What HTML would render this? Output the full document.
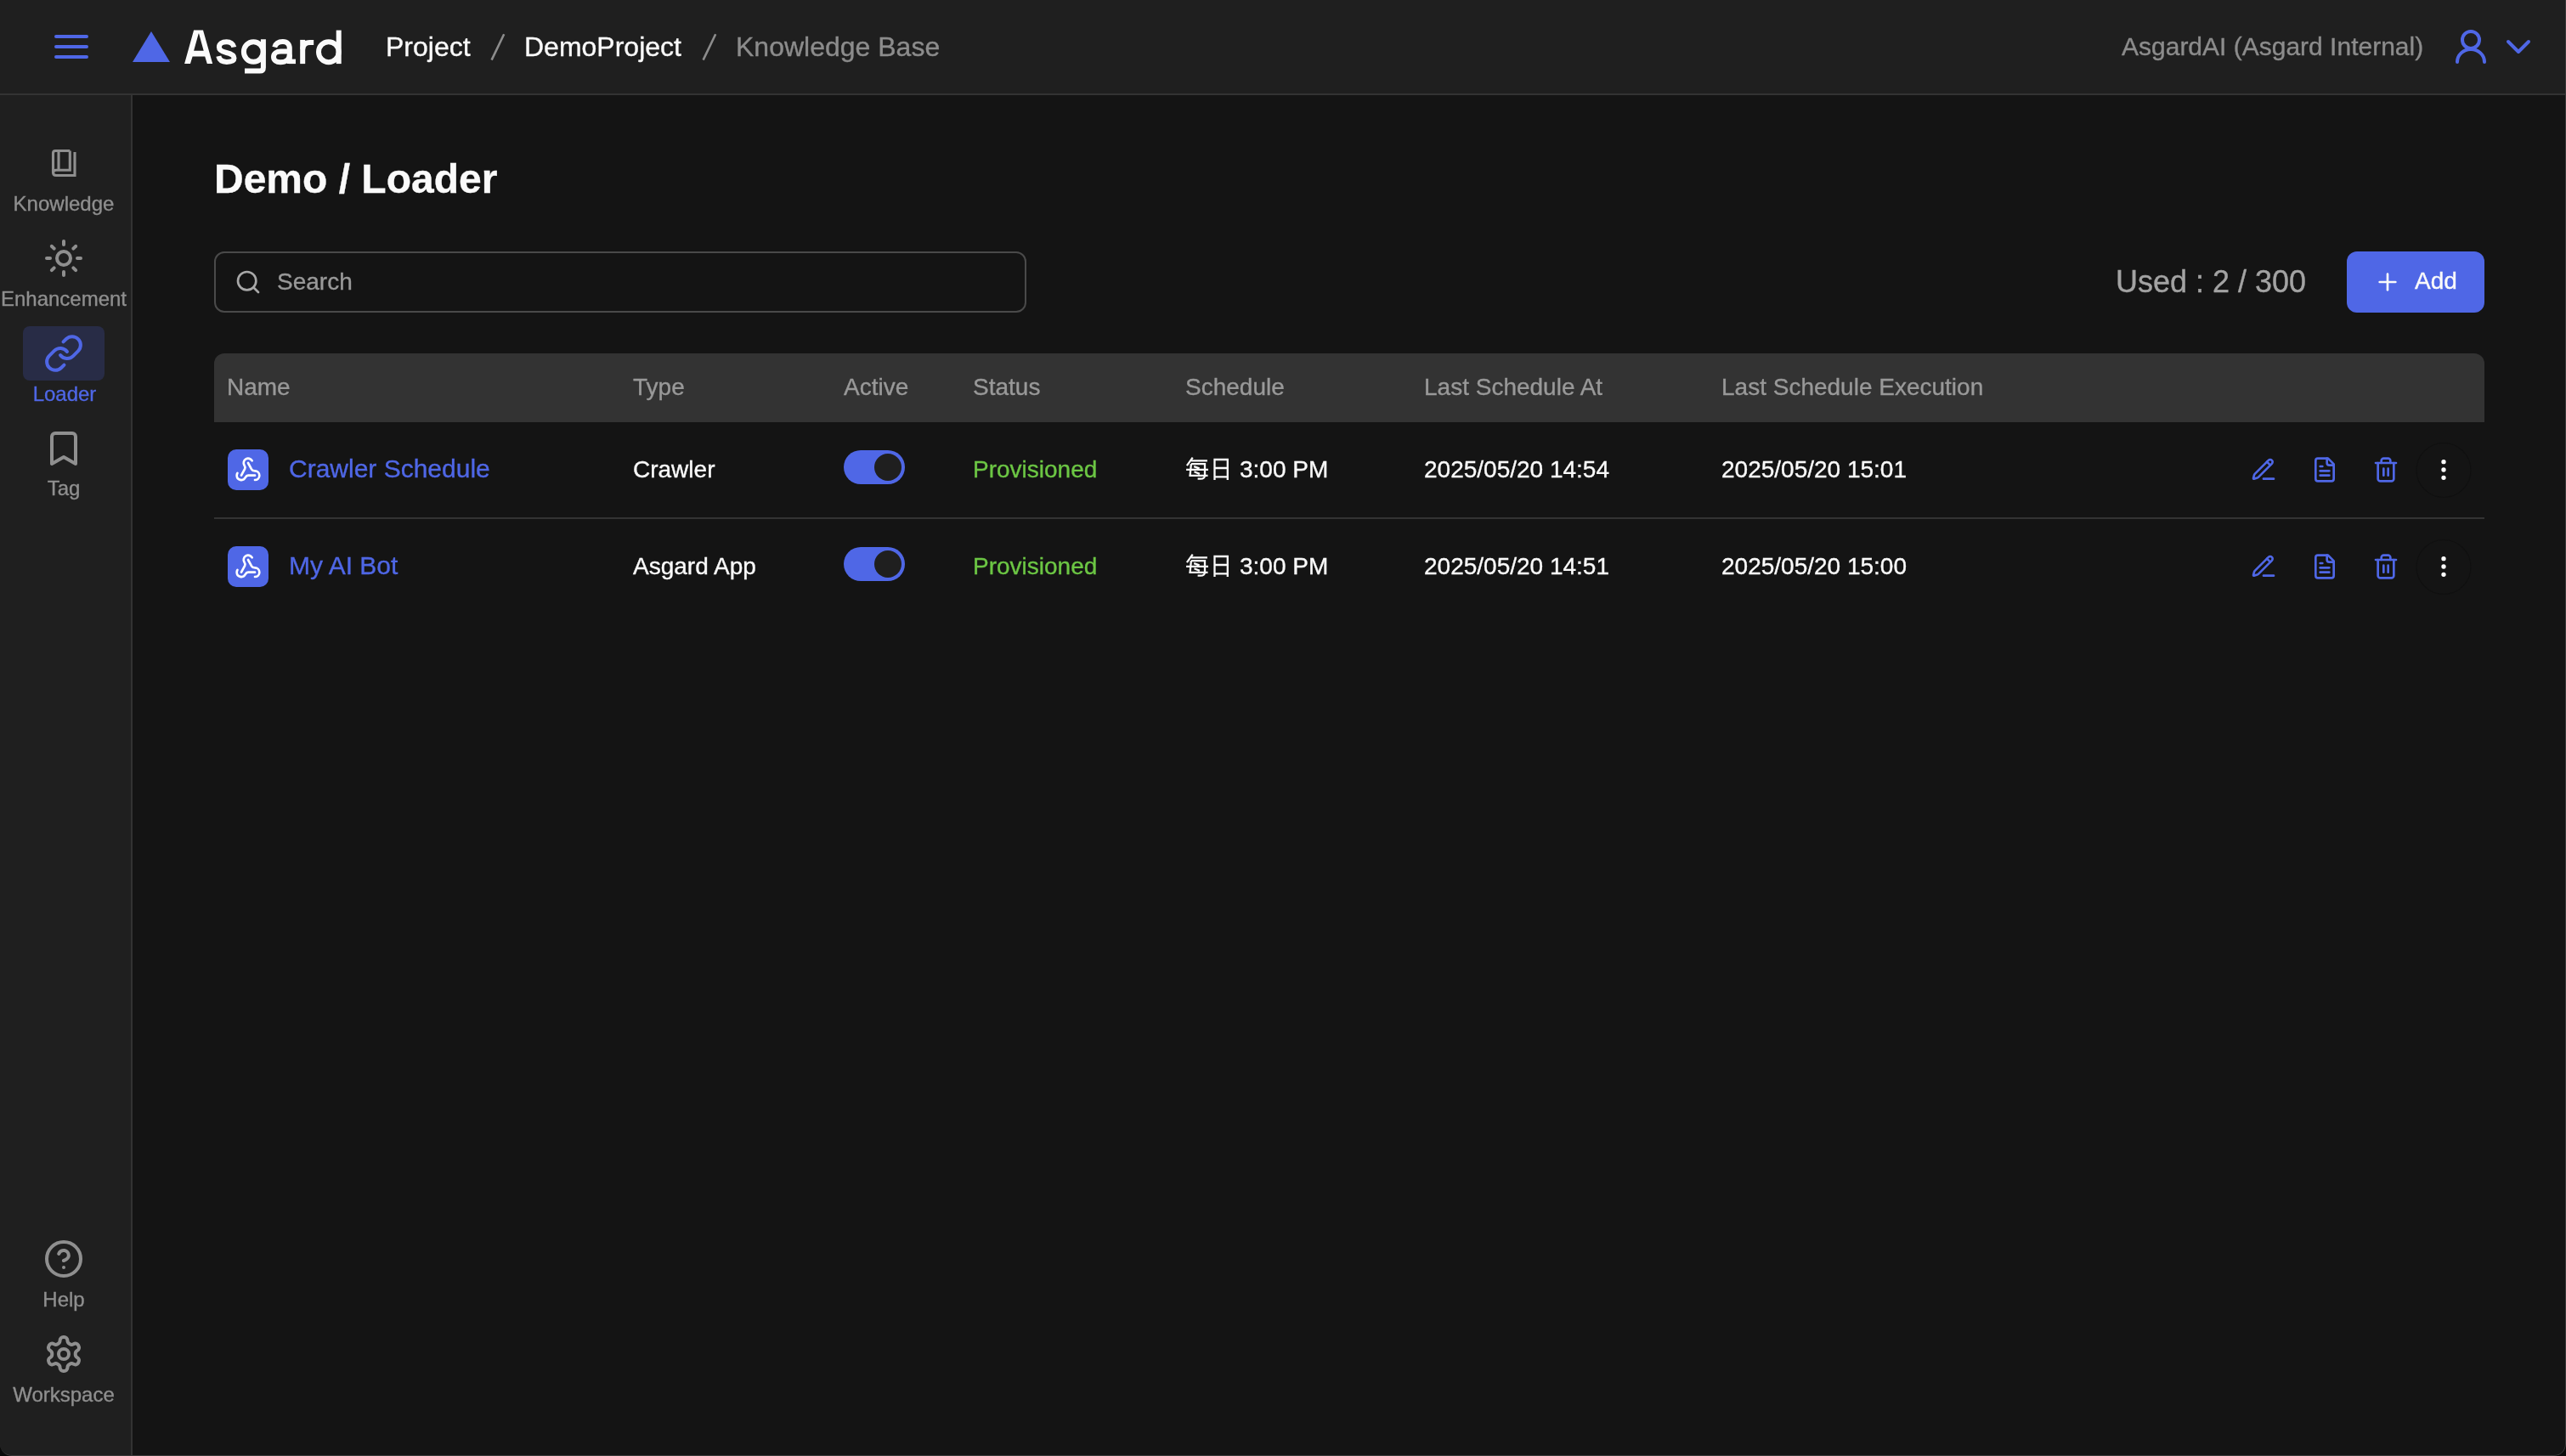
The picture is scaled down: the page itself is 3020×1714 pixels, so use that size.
<!DOCTYPE html>
<html><head><meta charset="utf-8"><title>Asgard - Loader</title>
<style>
html,body{margin:0;padding:0;background:#0b0b0b;}
body{width:3020px;height:1714px;overflow:hidden;position:relative;font-family:"Liberation Sans",sans-serif;}
.t{position:absolute;line-height:1;white-space:nowrap;will-change:transform;-webkit-text-stroke:0.35px currentColor;}
.abs{position:absolute;}
svg{position:absolute;overflow:visible;}
</style></head><body>
<div class="abs" style="left:0;top:0;width:3020px;height:1714px;background:#141414;border-radius:0 0 14px 14px;overflow:hidden">
<div class="abs" style="left:0;top:0;width:3020px;height:110px;background:#1f1f1f;border-bottom:2px solid #333"></div>
<div class="abs" style="left:0;top:112px;width:154px;height:1602px;background:#1f1f1f;border-right:2px solid #333"></div>
<div class="abs" style="left:0;top:0;width:3019px;height:1713px;border-right:1px solid #3a3a3a;border-bottom:1px solid #3a3a3a;border-radius:0 0 14px 14px"></div>
</div>
<div class="abs" style="left:64px;top:41px;width:40px;height:4px;border-radius:2px;background:#4f67e6"></div>
<div class="abs" style="left:64px;top:53px;width:40px;height:4px;border-radius:2px;background:#4f67e6"></div>
<div class="abs" style="left:64px;top:65px;width:40px;height:4px;border-radius:2px;background:#4f67e6"></div>
<svg width="3020" height="110" style="left:0;top:0"><polygon points="156,73 178,37 200,73" fill="#4f67e6"/></svg>
<svg width="420" height="110" style="left:0;top:0"><path fill="#fafafa" fill-rule="evenodd" d="M217.1 75.1L228.1 35.4H239L250.2 75.1H243.8L241.2 66.4H226.6L224 75.1ZM228.1 59.8H239.7L234.1 39.5H233.7Z"/><path fill="#fafafa" d="M340 69.6H348V75.1H340Z"/><g fill="none" stroke="#fafafa" stroke-width="6"><path d="M275.3 55.5C274.6 51.6 271 49.3 266.6 49.3C261.3 49.3 257.9 51.8 257.9 55.5C257.9 59.6 262 61 266.5 62C271.5 63.1 275.5 64.6 275.5 68.6C275.5 71.8 272.2 72.9 266.8 72.9C261.9 72.9 258.3 71 257.3 66.2"/><ellipse cx="298.3" cy="61" rx="11.4" ry="11.85"/><path d="M309.9 46.3V79.4Q309.9 83.5 305.8 83.5H288"/><path d="M323.2 55.5C324.5 51.2 327.8 49.1 332.8 49.1C338.2 49.1 340.8 52.3 340.8 57V74.9"/><path d="M340.8 60.5H330.5C325.2 60.5 322 63.3 322 66.9C322 70.9 325.2 73.2 330 73.2C336.4 73.2 340.8 69.8 340.8 64.4"/><path d="M356.2 75.1V46.9"/><path d="M356.2 58C356.6 52.6 359.8 50 364.8 50H369.2"/><ellipse cx="386.8" cy="61.2" rx="11.8" ry="12"/><path d="M398.7 35.6V75.1"/></g></svg>
<div class="t" style="left:454.0px;top:39.3px;font-size:32px;color:#fafafa;">Project</div>
<svg width="900" height="110" style="left:0;top:0"><path d="M593.2 40.2L578.6 70.6M842.2 40.2L827.6 70.6" stroke="#8c8c8c" stroke-width="2.6"/></svg>
<div class="t" style="left:617.0px;top:39.3px;font-size:32px;color:#fafafa;">DemoProject</div>
<div class="t" style="left:866.0px;top:39.3px;font-size:32px;color:#8c8c8c;">Knowledge Base</div>
<div class="t" style="left:2496.5px;top:40.1px;font-size:30px;color:#8c8c8c;">AsgardAI (Asgard Internal)</div>
<div class="t" style="left:-2.0px;top:227.7px;width:154px;text-align:center;font-size:24px;color:#8f8f8f">Knowledge</div>
<div class="t" style="left:-2.3px;top:339.7px;width:154px;text-align:center;font-size:24px;color:#8f8f8f">Enhancement</div>
<div class="abs" style="left:27px;top:384px;width:96px;height:64px;border-radius:8px;background:#282c46"></div>
<div class="t" style="left:-1.5px;top:451.7px;width:154px;text-align:center;font-size:24px;color:#4f67e6">Loader</div>
<div class="t" style="left:-2.0px;top:563.2px;width:154px;text-align:center;font-size:24px;color:#8f8f8f">Tag</div>
<div class="t" style="left:-2.0px;top:1517.7px;width:154px;text-align:center;font-size:24px;color:#8f8f8f">Help</div>
<div class="t" style="left:-2.5px;top:1629.7px;width:154px;text-align:center;font-size:24px;color:#8f8f8f">Workspace</div>
<div class="t" style="left:251.5px;top:187.4px;font-size:48px;color:#fafafa;font-weight:700;">Demo / Loader</div>
<div class="abs" style="left:252px;top:296px;width:952px;height:68px;border:2px solid #4a4a4a;border-radius:12px"></div>
<div class="t" style="left:326.2px;top:317.6px;font-size:28px;color:#999999;">Search</div>
<div class="t" style="left:2489.5px;top:313.5px;font-size:36px;color:#a3a3a3;">Used : 2 / 300</div>
<div class="abs" style="left:2762px;top:296px;width:162px;height:72px;border-radius:12px;background:#4f67e6"></div>
<div class="t" style="left:2842.0px;top:317.3px;font-size:28px;color:#fafafa;">Add</div>
<div class="abs" style="left:252px;top:416px;width:2672px;height:81px;background:#333333;border-radius:12px 12px 0 0"></div>
<div class="t" style="left:267.2px;top:441.8px;font-size:28px;color:#999999;">Name</div>
<div class="t" style="left:745.2px;top:441.8px;font-size:28px;color:#999999;">Type</div>
<div class="t" style="left:993.3px;top:441.8px;font-size:28px;color:#999999;">Active</div>
<div class="t" style="left:1144.5px;top:441.8px;font-size:28px;color:#999999;">Status</div>
<div class="t" style="left:1394.7px;top:441.8px;font-size:28px;color:#999999;">Schedule</div>
<div class="t" style="left:1675.7px;top:441.8px;font-size:28px;color:#999999;">Last Schedule At</div>
<div class="t" style="left:2025.6px;top:441.8px;font-size:28px;color:#999999;">Last Schedule Execution</div>
<div class="abs" style="left:252px;top:609px;width:2672px;height:2px;background:#333"></div>
<div class="abs" style="left:268px;top:529px;width:48px;height:48px;border-radius:10px;background:#4f67e6"></div>
<div class="t" style="left:339.8px;top:537.1px;font-size:30px;color:#4f67e6;">Crawler Schedule</div>
<div class="t" style="left:745.0px;top:538.8px;font-size:28px;color:#fafafa;">Crawler</div>
<div class="abs" style="left:993px;top:530px;width:72px;height:40px;border-radius:20px;background:#4f67e6"></div>
<div class="abs" style="left:1029px;top:534px;width:32px;height:32px;border-radius:16px;background:#1f1f1f"></div>
<div class="t" style="left:1144.9px;top:538.8px;font-size:28px;color:#6cc644;">Provisioned</div>
<div class="t" style="left:1459.0px;top:538.8px;font-size:28px;color:#fafafa;">3:00 PM</div>
<div class="t" style="left:1676.1px;top:538.8px;font-size:28px;color:#fafafa;">2025/05/20 14:54</div>
<div class="t" style="left:2025.6px;top:538.8px;font-size:28px;color:#fafafa;">2025/05/20 15:01</div>
<div class="abs" style="left:268px;top:643px;width:48px;height:48px;border-radius:10px;background:#4f67e6"></div>
<div class="t" style="left:339.8px;top:651.1px;font-size:30px;color:#4f67e6;">My AI Bot</div>
<div class="t" style="left:745.0px;top:652.8px;font-size:28px;color:#fafafa;">Asgard App</div>
<div class="abs" style="left:993px;top:644px;width:72px;height:40px;border-radius:20px;background:#4f67e6"></div>
<div class="abs" style="left:1029px;top:648px;width:32px;height:32px;border-radius:16px;background:#1f1f1f"></div>
<div class="t" style="left:1144.9px;top:652.8px;font-size:28px;color:#6cc644;">Provisioned</div>
<div class="t" style="left:1459.0px;top:652.8px;font-size:28px;color:#fafafa;">3:00 PM</div>
<div class="t" style="left:1676.1px;top:652.8px;font-size:28px;color:#fafafa;">2025/05/20 14:51</div>
<div class="t" style="left:2025.6px;top:652.8px;font-size:28px;color:#fafafa;">2025/05/20 15:00</div>
<svg width="3020" height="1714" style="left:0;top:0">
<g fill="none" stroke="#8f8f8f" stroke-width="3.1" stroke-linejoin="miter"><path d="M82.3 177.5H65.3Q62.5 177.5 62.5 180.3V203Q62.5 206.5 66 206.5H88V179"/><path d="M82.3 177.5V200.2H66Q62.5 200.2 62.5 203.5"/><path d="M69 177.5V200"/></g>
<g transform="translate(51,280) scale(2)" fill="none" stroke="#8f8f8f" stroke-width="2" stroke-linecap="round" stroke-linejoin="round"><circle cx="12" cy="12" r="4"/><path d="M12 2v2"/><path d="M12 20v2"/><path d="m4.93 4.93 1.41 1.41"/><path d="m17.66 17.66 1.41 1.41"/><path d="M2 12h2"/><path d="M20 12h2"/><path d="m6.34 17.66-1.41 1.41"/><path d="m19.07 4.93-1.41 1.41"/></g>
<g transform="translate(51,392) scale(2)" fill="none" stroke="#4f67e6" stroke-width="2" stroke-linecap="round" stroke-linejoin="round"><path d="M10 13a5 5 0 0 0 7.54.54l3-3a5 5 0 0 0-7.07-7.07l-1.72 1.71"/><path d="M14 11a5 5 0 0 0-7.54-.54l-3 3a5 5 0 0 0 7.07 7.07l1.71-1.71"/></g>
<g transform="translate(51,504) scale(2)" fill="none" stroke="#8f8f8f" stroke-width="2" stroke-linecap="round" stroke-linejoin="round"><path d="m19 21-7-4-7 4V5a2 2 0 0 1 2-2h10a2 2 0 0 1 2 2v16z"/></g>
<g transform="translate(51,1458) scale(2)" fill="none" stroke="#8f8f8f" stroke-width="2" stroke-linecap="round" stroke-linejoin="round"><circle cx="12" cy="12" r="10"/><path d="M9.09 9a3 3 0 0 1 5.83 1c0 2-3 3-3 3"/><path d="M12 17h.01"/></g>
<g transform="translate(51,1570) scale(2)" fill="none" stroke="#8f8f8f" stroke-width="2" stroke-linecap="round" stroke-linejoin="round"><path d="M12.22 2h-.44a2 2 0 0 0-2 2v.18a2 2 0 0 1-1 1.73l-.43.25a2 2 0 0 1-2 0l-.15-.08a2 2 0 0 0-2.73.73l-.22.38a2 2 0 0 0 .73 2.73l.15.1a2 2 0 0 1 1 1.72v.51a2 2 0 0 1-1 1.74l-.15.09a2 2 0 0 0-.73 2.73l.22.38a2 2 0 0 0 2.73.73l.15-.08a2 2 0 0 1 2 0l.43.25a2 2 0 0 1 1 1.73V20a2 2 0 0 0 2 2h.44a2 2 0 0 0 2-2v-.18a2 2 0 0 1 1-1.73l.43-.25a2 2 0 0 1 2 0l.15.08a2 2 0 0 0 2.73-.73l.22-.39a2 2 0 0 0-.73-2.73l-.15-.08a2 2 0 0 1-1-1.74v-.5a2 2 0 0 1 1-1.74l.15-.09a2 2 0 0 0 .73-2.73l-.22-.38a2 2 0 0 0-2.73-.73l-.15.08a2 2 0 0 1-2 0l-.43-.25a2 2 0 0 1-1-1.73V4a2 2 0 0 0-2-2z"/><circle cx="12" cy="12" r="3"/></g>
<g fill="none" stroke="#4f67e6" stroke-width="4" stroke-linecap="round" stroke-linejoin="round"><circle cx="2908" cy="46.9" r="10"/><path d="M2892 73A16 15 0 0 1 2924 73"/><path d="M2952 49L2964 61L2976 49"/></g>
<g transform="translate(276,316) scale(1.3333333333333333)" fill="none" stroke="#a8a8a8" stroke-width="2" stroke-linecap="round" stroke-linejoin="round"><circle cx="11" cy="11" r="8"/><path d="m21 21-4.3-4.3"/></g>
<g transform="translate(2794,316) scale(1.3333333333333333)" fill="none" stroke="#fafafa" stroke-width="2" stroke-linecap="round" stroke-linejoin="round"><path d="M5 12h14"/><path d="M12 5v14"/></g>
<g transform="translate(0,0)" fill="none" stroke="#fafafa" stroke-width="2.3"><path d="M1403.7 538.6L1396.9 548.2M1402.2 542.4H1420.9M1401.9 546.2L1400.6 560M1402 546.2H1418V560Q1417.6 563.7 1413 563.7H1409.6M1396.1 552.8H1422M1399.4 559.8H1421.5M1405.2 549.2L1411.6 551.3M1405.5 555.3L1411.9 557.9"/><path d="M1429.5 565V541H1444.8V565M1429.5 551H1444.8M1429.5 561.4H1444.8"/></g>
<g transform="translate(276,537) scale(1.3333333333333333)" fill="none" stroke="#ffffff" stroke-width="2" stroke-linecap="round" stroke-linejoin="round"><path d="M18 16.98h-5.99c-1.1 0-1.95.94-2.48 1.9A4 4 0 0 1 2 17c.01-.7.2-1.4.57-2"/><path d="m6 17 3.13-5.78c.53-.97.1-2.18-.5-3.1a4 4 0 1 1 6.89-4.06"/><path d="m12 6 3.13 5.73C15.66 12.7 16.9 13 18 13a4 4 0 0 1 0 8"/></g>
<g transform="translate(2648,537) scale(1.3333333333333333)" fill="none" stroke="#4f67e6" stroke-width="2" stroke-linecap="round" stroke-linejoin="round"><path d="M12 20h9"/><path d="M16.376 3.622a1 1 0 0 1 3.002 3.002L7.368 18.635a2 2 0 0 1-.855.506l-2.872.838a.5.5 0 0 1-.62-.62l.838-2.872a2 2 0 0 1 .506-.854z"/><path d="m15 5 3 3"/></g>
<g transform="translate(2720,537) scale(1.3333333333333333)" fill="none" stroke="#4f67e6" stroke-width="2" stroke-linecap="round" stroke-linejoin="round"><path d="M15 2H6a2 2 0 0 0-2 2v16a2 2 0 0 0 2 2h12a2 2 0 0 0 2-2V7Z"/><path d="M14 2v4a2 2 0 0 0 2 2h4"/><path d="M10 9H8"/><path d="M16 13H8"/><path d="M16 17H8"/></g>
<g transform="translate(2792,537) scale(1.3333333333333333)" fill="none" stroke="#4f67e6" stroke-width="2" stroke-linecap="round" stroke-linejoin="round"><path d="M3 6h18"/><path d="M19 6v14c0 1-1 2-2 2H7c-1 0-2-1-2-2V6"/><path d="M8 6V4c0-1 1-2 2-2h4c1 0 2 1 2 2v2"/><line x1="10" x2="10" y1="11" y2="17"/><line x1="14" x2="14" y1="11" y2="17"/></g>
<circle cx="2876" cy="553.5" r="32" fill="none" stroke="#101010" stroke-width="1.2"/>
<g transform="translate(2860,537) scale(1.3333333333333333)" fill="none" stroke="#ffffff" stroke-width="2" stroke-linecap="round" stroke-linejoin="round"><circle cx="12" cy="12" r="1"/><circle cx="12" cy="5" r="1"/><circle cx="12" cy="19" r="1"/></g>
<g transform="translate(0,114)" fill="none" stroke="#fafafa" stroke-width="2.3"><path d="M1403.7 538.6L1396.9 548.2M1402.2 542.4H1420.9M1401.9 546.2L1400.6 560M1402 546.2H1418V560Q1417.6 563.7 1413 563.7H1409.6M1396.1 552.8H1422M1399.4 559.8H1421.5M1405.2 549.2L1411.6 551.3M1405.5 555.3L1411.9 557.9"/><path d="M1429.5 565V541H1444.8V565M1429.5 551H1444.8M1429.5 561.4H1444.8"/></g>
<g transform="translate(276,651) scale(1.3333333333333333)" fill="none" stroke="#ffffff" stroke-width="2" stroke-linecap="round" stroke-linejoin="round"><path d="M18 16.98h-5.99c-1.1 0-1.95.94-2.48 1.9A4 4 0 0 1 2 17c.01-.7.2-1.4.57-2"/><path d="m6 17 3.13-5.78c.53-.97.1-2.18-.5-3.1a4 4 0 1 1 6.89-4.06"/><path d="m12 6 3.13 5.73C15.66 12.7 16.9 13 18 13a4 4 0 0 1 0 8"/></g>
<g transform="translate(2648,651) scale(1.3333333333333333)" fill="none" stroke="#4f67e6" stroke-width="2" stroke-linecap="round" stroke-linejoin="round"><path d="M12 20h9"/><path d="M16.376 3.622a1 1 0 0 1 3.002 3.002L7.368 18.635a2 2 0 0 1-.855.506l-2.872.838a.5.5 0 0 1-.62-.62l.838-2.872a2 2 0 0 1 .506-.854z"/><path d="m15 5 3 3"/></g>
<g transform="translate(2720,651) scale(1.3333333333333333)" fill="none" stroke="#4f67e6" stroke-width="2" stroke-linecap="round" stroke-linejoin="round"><path d="M15 2H6a2 2 0 0 0-2 2v16a2 2 0 0 0 2 2h12a2 2 0 0 0 2-2V7Z"/><path d="M14 2v4a2 2 0 0 0 2 2h4"/><path d="M10 9H8"/><path d="M16 13H8"/><path d="M16 17H8"/></g>
<g transform="translate(2792,651) scale(1.3333333333333333)" fill="none" stroke="#4f67e6" stroke-width="2" stroke-linecap="round" stroke-linejoin="round"><path d="M3 6h18"/><path d="M19 6v14c0 1-1 2-2 2H7c-1 0-2-1-2-2V6"/><path d="M8 6V4c0-1 1-2 2-2h4c1 0 2 1 2 2v2"/><line x1="10" x2="10" y1="11" y2="17"/><line x1="14" x2="14" y1="11" y2="17"/></g>
<circle cx="2876" cy="667.5" r="32" fill="none" stroke="#101010" stroke-width="1.2"/>
<g transform="translate(2860,651) scale(1.3333333333333333)" fill="none" stroke="#ffffff" stroke-width="2" stroke-linecap="round" stroke-linejoin="round"><circle cx="12" cy="12" r="1"/><circle cx="12" cy="5" r="1"/><circle cx="12" cy="19" r="1"/></g>
</svg>
</body></html>
